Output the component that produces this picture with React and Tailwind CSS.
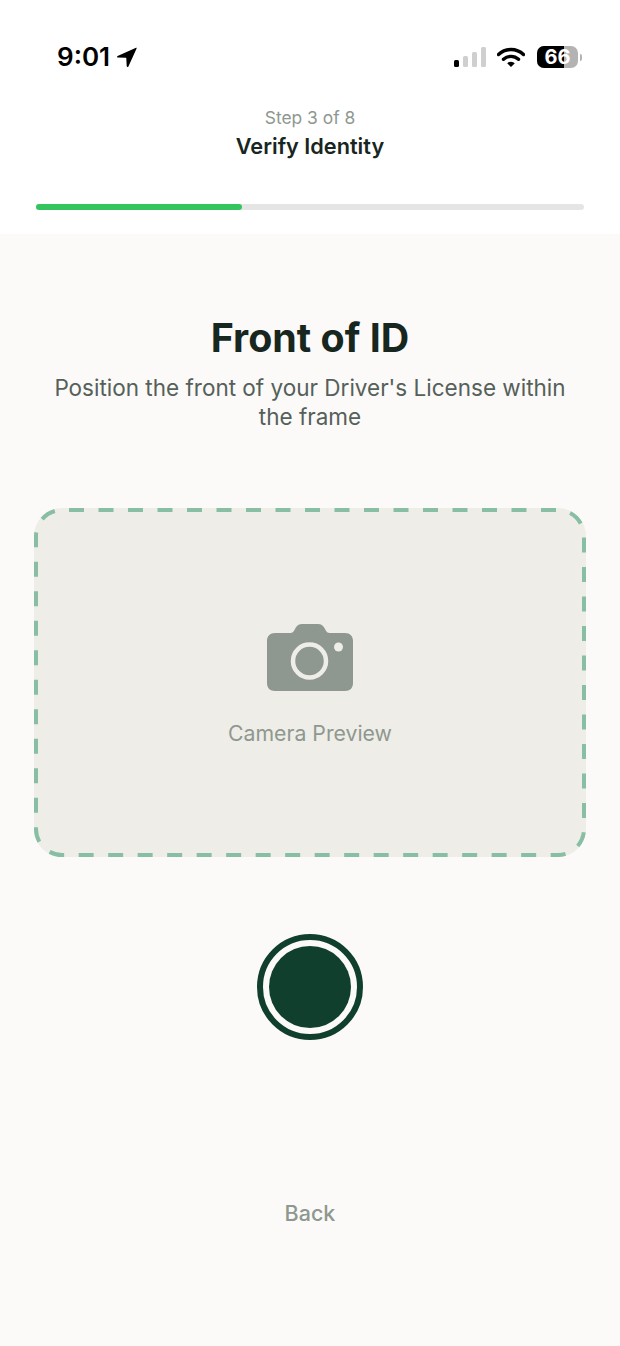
const font = { fontFamily: "Inter, sans-serif" };

const StatusBar = () => (
  <div className="flex items-center justify-between h-[58px] pl-[57px] pr-[38px]">
    <div className="flex items-center gap-[6px]">
      <span className="text-[26px] leading-none font-semibold text-black">9:01</span>
      <svg width="22" height="22" viewBox="0 0 22 22">
        <path d="M20.6 1.600 1.600 10c-.9.400-.6 1.600.3 1.600l7.900.2c.3 0 .5.200.5.500l.4 7.800c0 1 1.300 1.200 1.700.3l8.200-18c.2-.5-.3-1-.9-.8z" fill="#000" />
      </svg>
    </div>
    <div className="flex items-center">
      <svg width="34" height="22" viewBox="0 0 34 22" className="mr-[10px]">
        <rect x="1" y="14" width="5" height="7" rx="1.500" fill="#000" />
        <rect x="10" y="10" width="5" height="11" rx="1.500" fill="#cfcfcf" />
        <rect x="19" y="6" width="5" height="15" rx="1.500" fill="#cfcfcf" />
        <rect x="28" y="1" width="5" height="20" rx="1.500" fill="#cfcfcf" />
      </svg>
      <svg width="28" height="21" viewBox="0 0 28 21" className="mr-[12px]">
        <path d="M1.500 7.500a18 18 0 0 1 25 0" fill="none" stroke="#000" strokeWidth="3.400" strokeLinecap="round" />
        <path d="M6.500 12.300a11 11 0 0 1 15 0" fill="none" stroke="#000" strokeWidth="3.400" strokeLinecap="round" />
        <path d="M10.200 16.200 14 20l3.800-3.800a5.500 5.500 0 0 0-7.600 0z" fill="#000" />
      </svg>
      <div className="relative flex items-center justify-center w-[41px] h-[22px] rounded-[7px] overflow-hidden bg-[#b3b3b3]">
        <div className="absolute left-0 top-0 bottom-0 w-[27px] bg-black" />
        <span className="relative text-[20px] leading-none font-bold text-white">66</span>
      </div>
      <div className="ml-[2px] w-[2px] h-[7px] rounded-r bg-[#b3b3b3]" />
    </div>
  </div>
);

const CameraIcon = () => (
  <svg width="86" height="67" viewBox="0 0 86 67">
    <path
      d="M8 9h15.500c1.500 0 2.600-.7 3.400-2l1.800-3.200C30 1.500 32 0 35 0h16c3 0 5 1.500 6.300 3.800L59.100 7c.8 1.300 1.900 2 3.400 2H78c5 0 8 3 8 8v42c0 5-3 8-8 8H8c-5 0-8-3-8-8V17c0-5 3-8 8-8z"
      fill="#8e9890"
    />
    <circle cx="42.500" cy="37" r="16.500" fill="none" stroke="#eeede7" strokeWidth="4.500" />
    <circle cx="71.500" cy="23" r="4.500" fill="#eeede7" />
  </svg>
);

export default function App() {
  return (
    <div className="w-[620px] h-[1346px] flex flex-col bg-[#fbfaf8]" style={font}>
      {/* Header */}
      <div className="bg-white h-[234px] pt-[28px] flex-shrink-0">
        <StatusBar />
        <div className="mt-[22px] text-center">
          <p className="text-[17.400px] leading-[20px] text-[#8e9890]">Step 3 of 8</p>
          <h1 className="mt-[5px] text-[21.700px] leading-[26px] font-semibold text-[#17261e]">Verify Identity</h1>
        </div>
        <div className="mx-[36px] mt-[45px] h-[6px] rounded-full bg-[#e5e5e5]">
          <div className="h-full w-[206px] rounded-full bg-[#34c55f]" />
        </div>
      </div>

      {/* Content */}
      <div className="flex flex-col items-center px-[34px] pt-[80px]">
        <h2 className="text-[39.400px] leading-[48px] font-bold text-[#17261e]">Front of ID</h2>
        <p className="mt-[11px] w-[530px] text-center text-[22.500px] leading-[29px] text-[#55605a]">
          Position the front of your Driver's License within the frame
        </p>

        <div className="relative mt-[77px] w-[552px] h-[349px] rounded-[28px] bg-[#eeede7] flex flex-col items-center pt-[116px]">
          <svg className="absolute inset-0" width="552" height="349" viewBox="0 0 552 349" fill="none">
            <rect x="2" y="2" width="548" height="345" rx="26" stroke="#88bfa4" strokeWidth="4" strokeDasharray="15 14.500" strokeDashoffset="-7" />
          </svg>
          <CameraIcon />
          <p className="mt-[29px] text-[21.250px] leading-[26px] text-[#8e9890]">Camera Preview</p>
        </div>

        <div className="mt-[77px] w-[106px] h-[106px] rounded-full border-[6px] border-[#10402d] p-[6px]">
          <div className="w-full h-full rounded-full bg-[#10402d]" />
        </div>

        <p className="mt-[160px] text-[21.500px] leading-[26px] font-medium text-[#8e9890]">Back</p>
      </div>
    </div>
  );
}
